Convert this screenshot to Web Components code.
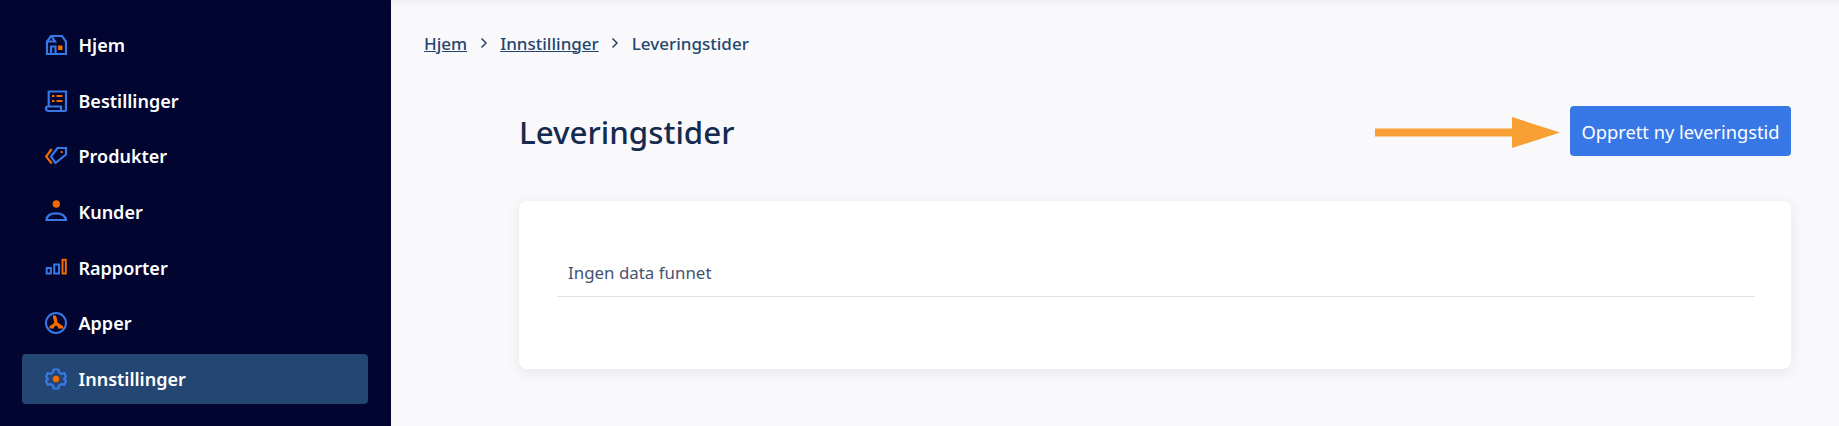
<!DOCTYPE html>
<html lang="no">
<head>
<meta charset="utf-8">
<title>Leveringstider</title>
<style>
    html, body { margin: 0; height: 100%; }
    body { font-family: "Noto Sans", "Open Sans", sans-serif; overflow: hidden; }
</style>
</head>
<body>
<app-shell>
    <side-nav slot="nav">
        <nav-item label="Hjem">
            <svg viewBox="0 0 22 22" fill="none" stroke="#3777e6" stroke-width="2.200">
                <path d="M2 20V7.500L6 2H17L21 7.500V20Z"/>
                <path d="M2 7.500H10L6.500 2"/>
                <path d="M6 20V12.500H10.500V20"/>
                <rect x="13" y="11.500" width="4.500" height="4.500" fill="#f26a00" stroke="none"/>
            </svg>
        </nav-item>
        <nav-item label="Bestillinger">
            <svg viewBox="0 0 22 22" fill="none" stroke="#3777e6" stroke-width="2.200">
                <path d="M3.700 16V1.500H21V20Q21 21 20 21H4Q1 21 1 18.500Q1 16.500 3 16.500H16V21"/>
                <g fill="#f26a00" stroke="none">
                    <rect x="7" y="5" width="2.500" height="2"/><rect x="11.500" y="5" width="6" height="2"/>
                    <rect x="7" y="10" width="2.500" height="2"/><rect x="11.500" y="10" width="6" height="2"/>
                </g>
            </svg>
        </nav-item>
        <nav-item label="Produkter">
            <svg viewBox="0 0 22 22" fill="none" stroke="#3777e6" stroke-width="2.200">
                <path d="M6 11.500L12.500 3H21V9.500L10.500 18Z"/>
                <path d="M6.700 4L1.200 11.500L6.700 18.500" stroke="#f26a00"/>
                <rect x="15.700" y="6" width="2" height="2" fill="#f26a00" stroke="none"/>
            </svg>
        </nav-item>
        <nav-item label="Kunder">
            <svg viewBox="0 0 22 22" fill="none" stroke="#3777e6" stroke-width="2.200">
                <circle cx="11.300" cy="3" r="3.700" fill="#f26a00" stroke="none"/>
                <path d="M1.500 19Q2 12.300 11 12.300Q20 12.300 21 19Z"/>
            </svg>
        </nav-item>
        <nav-item label="Rapporter">
            <svg viewBox="0 0 22 22" fill="none" stroke="#3777e6" stroke-width="2">
                <rect x="1.700" y="11" width="4.200" height="5.500"/>
                <rect x="9.200" y="7.500" width="4.800" height="9"/>
                <rect x="17.500" y="2.800" width="3.300" height="13.700" stroke="#f26a00"/>
            </svg>
        </nav-item>
        <nav-item label="Apper">
            <svg viewBox="0 0 22 22" fill="none" stroke="#3777e6" stroke-width="2">
                <circle cx="11" cy="11" r="10"/>
                <path d="M11 11.500L10 5.500M11 11.500L7 14.500M11 11.500L15.500 14.500" stroke="#f26a00" stroke-width="3.400"/>
                <path d="M8 5H11M4.500 15H9M13 15H18" stroke="#f26a00" stroke-width="2.800"/>
            </svg>
        </nav-item>
        <nav-item label="Innstillinger" active>
            <svg viewBox="0 0 22 22" fill="none" stroke="#3777e6" stroke-width="2.200" stroke-linejoin="round">
                <path d="M8.500 1.500H13.500L14 4.500L16.500 6L19.300 5L21 9L19 11L21 13L19.300 17L16.500 16L14 17.500L13.500 20.500H8.500L8 17.500L5.500 16L2.700 17L1 13L3 11L1 9L2.700 5L5.500 6L8 4.500Z"/>
                <circle cx="11" cy="11" r="3.200" fill="#f26a00" stroke="none"/>
            </svg>
        </nav-item>
    </side-nav>

    <bread-crumbs>
        <a href="#">Hjem</a>
        <a href="#">Innstillinger</a>
        <span>Leveringstider</span>
    </bread-crumbs>

    <page-header heading="Leveringstider">
        <primary-button>Opprett ny leveringstid</primary-button>
    </page-header>

    <data-card>Ingen data funnet</data-card>
</app-shell>

<template id="app-shell-tpl">
    <style>
        :host {
            display: flex;
            width: 100%;
            height: 100vh;
            background: #f9f9fb;
        }
        .main {
            flex: 1;
            min-width: 0;
            box-shadow: inset 0 6px 6px -4px rgba(0, 0, 0, .05);
        }
    </style>
    <slot name="nav"></slot>
    <div class="main"><slot></slot></div>
</template>

<template id="side-nav-tpl">
    <style>
        :host {
            display: flex;
            flex-direction: column;
            gap: 5.7px;
            box-sizing: border-box;
            width: 391px;
            flex: none;
            padding: 20px 23px 0 22px;
            background: #01052f;
        }
    </style>
    <slot></slot>
</template>

<template id="nav-item-tpl">
    <style>
        :host {
            display: flex;
            align-items: center;
            gap: 11.500px;
            height: 50px;
            padding-left: 23px;
            border-radius: 4px;
            color: #fff;
            font-size: 18px;
            font-weight: 600;
        }
        :host([active]) { background: #244672; }
        ::slotted(svg) { width: 22px; height: 22px; flex: none; overflow: visible; }
    </style>
    <slot></slot>
    <span class="label"></span>
</template>

<template id="bread-crumbs-tpl">
    <style>
        :host {
            display: flex;
            align-items: center;
            padding: 30px 0 0 33px;
            height: 26px;
            color: #24466f;
            font-size: 17px;
            font-weight: 500;
        }
        ::slotted(a) { color: inherit; text-decoration: underline; }
    </style>
    <slot></slot>
</template>

<template id="page-header-tpl">
    <style>
        :host {
            display: flex;
            align-items: center;
            justify-content: space-between;
            position: relative;
            height: 50px;
            margin: 50px 48px 45px 128px;
        }
        h1 {
            margin: 2px 0 0;
            color: #152a4f;
            font-size: 31.300px;
            font-weight: 500;
        }
        .arrow {
            position: absolute;
            right: 231px;
            top: 11px;
            width: 185px;
            height: 31px;
        }
    </style>
    <h1></h1>
    <slot></slot>
    <svg class="arrow" viewBox="0 0 185 31"><path d="M0 11.500H137V0L185 15.500L137 31V19.500H0Z" fill="#f9a034"/></svg>
</template>

<template id="primary-button-tpl">
    <style>
        :host { display: block; }
        button {
            height: 50px;
            width: 221px;
            padding: 0;
            border: 0;
            border-radius: 4px;
            background: #3777e6;
            color: #fff;
            font: inherit;
            font-size: 18.300px;
        }
    </style>
    <button type="button"><slot></slot></button>
</template>

<template id="data-card-tpl">
    <style>
        :host {
            display: block;
            box-sizing: border-box;
            height: 168px;
            margin: 0 48px 0 128px;
            padding: 48px 36px 0 38px;
            border-radius: 8px;
            background: #fff;
            box-shadow: 0 3px 14px rgba(20, 30, 60, .09);
        }
        .row {
            height: 47px;
            padding-left: 11px;
            line-height: 47px;
            border-bottom: 1px solid #e0e2e6;
            color: #46536f;
            font-size: 16.900px;
        }
    </style>
    <div class="row"><slot></slot></div>
</template>

<script>
    // every element clones its template into an open shadow root
    class BaseElement extends HTMLElement
    {
        constructor()
        {
            super();
            this.shadow = this.attachShadow({mode: "open"});
            const tpl = document.getElementById(this.localName + "-tpl");
            this.shadow.appendChild(tpl.content.cloneNode(true));
        }
    }

    class AppShell extends BaseElement {}
    class SideNav extends BaseElement {}
    class PrimaryButton extends BaseElement {}
    class DataCard extends BaseElement {}

    class NavItem extends BaseElement
    {
        connectedCallback()
        {
            this.shadow.querySelector(".label").textContent = this.getAttribute("label");
        }
    }

    class PageHeader extends BaseElement
    {
        connectedCallback()
        {
            this.shadow.querySelector("h1").textContent = this.getAttribute("heading");
        }
    }

    class BreadCrumbs extends BaseElement
    {
        connectedCallback()
        {
            // chevrons go between the slotted links
            const items = [...this.children];
            items.slice(0, -1).forEach(item => {
                const sep = document.createElementNS("http://www.w3.org/2000/svg", "svg");
                sep.setAttribute("viewBox", "0 0 8 12");
                sep.setAttribute("width", "8");
                sep.setAttribute("height", "12");
                sep.style.margin = "0 12.500px";
                sep.innerHTML = '<path d="M1.500 1.500L6 6L1.500 10.500" fill="none" stroke="#24466f" stroke-width="1.500"/>';
                item.after(sep);
            });
        }
    }

    customElements.define("app-shell", AppShell);
    customElements.define("side-nav", SideNav);
    customElements.define("nav-item", NavItem);
    customElements.define("bread-crumbs", BreadCrumbs);
    customElements.define("page-header", PageHeader);
    customElements.define("primary-button", PrimaryButton);
    customElements.define("data-card", DataCard);
</script>
</body>
</html>
